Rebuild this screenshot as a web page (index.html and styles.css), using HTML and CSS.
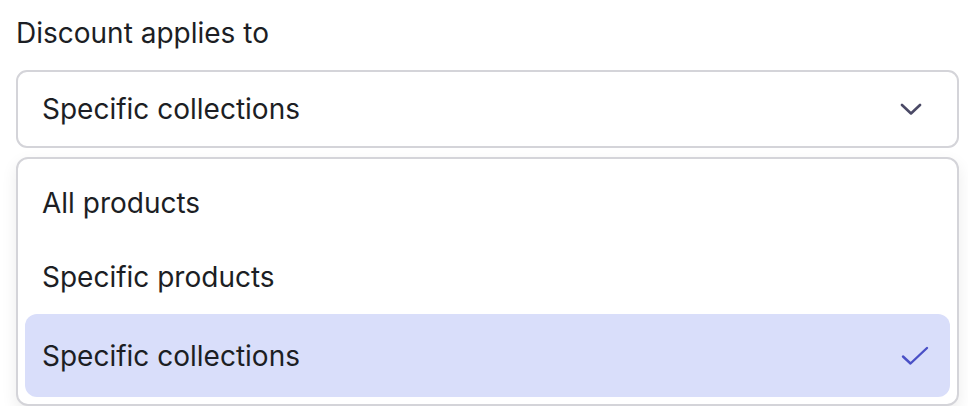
FILE: index.html
```html
<!DOCTYPE html>
<html lang="en">
<head>
<meta charset="utf-8">
<title>Discount applies to</title>
<link rel="stylesheet" href="styles.css">
</head>
<body>
<div class="field">
  <label class="label">Discount applies to</label>
  <div class="select">
    <span class="select-value">Specific collections</span>
    <svg class="chevron" width="22" height="12" viewBox="0 0 22 12" fill="none"><path d="M2 2 L11 10.5 L20 2" stroke="#4b4a66" stroke-width="2.6" stroke-linecap="round" stroke-linejoin="round"/></svg>
  </div>
  <ul class="menu">
    <li class="option">All products</li>
    <li class="option">Specific products</li>
    <li class="option selected">Specific collections
      <svg class="check" width="28" height="20" viewBox="0 0 28 20" fill="none"><path d="M2 10.5 L9.5 17.5 L26 2" stroke="#4a50c6" stroke-width="2.4" stroke-linecap="round" stroke-linejoin="round"/></svg>
    </li>
  </ul>
</div>
</body>
</html>
```
FILE: styles.css
```css
* { box-sizing: border-box; }
html, body { margin: 0; padding: 0; background: #ffffff; }
body {
  font-family: Inter, "Noto Sans", "Liberation Sans", sans-serif;
  color: #1c1e24;
  font-size: 28px;
}
.field {
  width: 943px;
  margin-left: 16px;
  padding-top: 13px;
  display: flex;
  flex-direction: column;
}
.label {
  display: block;
  line-height: 40px;
  height: 40px;
  margin-bottom: 17px;
}
.select {
  height: 78px;
  border: 2px solid #d4d4d9;
  border-radius: 11px;
  display: flex;
  align-items: center;
  justify-content: space-between;
  padding: 0 35px 0 24px;
  line-height: 40px;
}
.chevron { display: block; }
.menu {
  list-style: none;
  margin: 9px 0 0 0;
  padding: 7px 7px 7px 7px;
  border: 2px solid #d4d4d9;
  border-radius: 12px;
  background: #fff;
  box-shadow: 0 6px 16px rgba(0,0,0,0.08);
  display: flex;
  flex-direction: column;
}
.option {
  height: 74px;
  display: flex;
  align-items: center;
  justify-content: space-between;
  padding: 0 21px 0 17px;
  line-height: 40px;
  border-radius: 12px;
}
.option.selected {
  height: 83px;
  background: #d9defa;
}
.check { display: block; }
```
